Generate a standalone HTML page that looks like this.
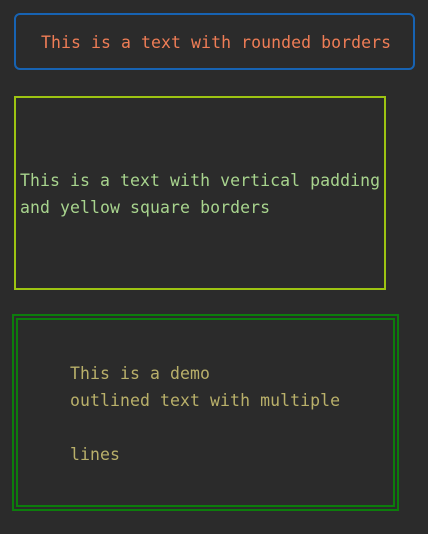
<!DOCTYPE html>
<html><head><style>
body{margin:0;width:428px;height:534px;background:#2b2b2b;position:relative;overflow:hidden;font-family:"DejaVu Sans Mono","Liberation Mono",monospace;font-size:16.5px;}
.b{position:absolute;box-sizing:border-box}
.t{position:absolute;white-space:pre;line-height:20px;letter-spacing:0.07px}
</style></head><body>
<div class="b" style="left:14px;top:13px;width:401px;height:57px;border:2px solid #1763b3;border-radius:6px"></div>
<div class="t" style="left:41px;top:33px;color:#ef7d56">This is a text with rounded borders</div>
<div class="b" style="left:14px;top:96px;width:372px;height:194px;border:2px solid #9dc412"></div>
<div class="t" style="left:20px;top:171px;color:#a8d48e">This is a text with vertical padding</div>
<div class="t" style="left:20px;top:198px;color:#a8d48e">and yellow square borders</div>
<div class="b" style="left:12px;top:314px;width:387px;height:197px;border:2px solid #0c7d0c"></div>
<div class="b" style="left:16px;top:318px;width:379px;height:189px;border:2px solid #0c7d0c"></div>
<div class="t" style="left:70px;top:364px;color:#b9b06a">This is a demo</div>
<div class="t" style="left:70px;top:391px;color:#b9b06a">outlined text with multiple</div>
<div class="t" style="left:70px;top:445px;color:#b9b06a">lines</div>
</body></html>
